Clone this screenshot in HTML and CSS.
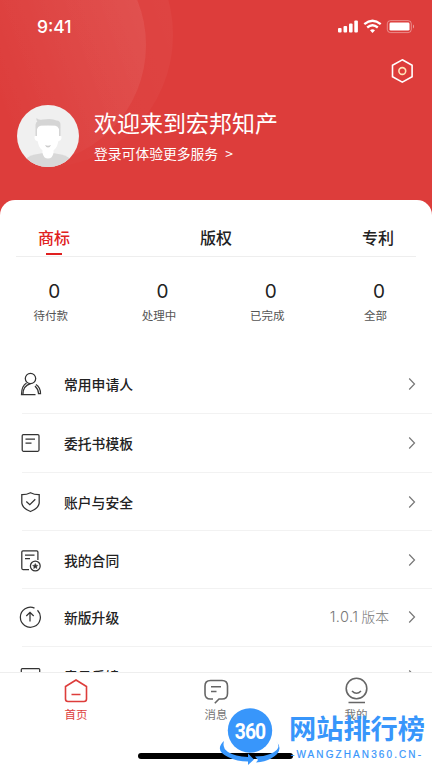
FILE: index.html
```html
<!DOCTYPE html>
<html lang="zh-CN">
<head>
<meta charset="utf-8">
<title>我的</title>
<link rel="stylesheet" href="styles.css">
</head>
<body>
<div class="app">
  <header class="hero">
    <div class="status">
      <span class="time">9:41</span>
      <svg class="status-icons" width="78" height="16" viewBox="0 0 78 16">
        <g fill="#fff">
          <rect x="1" y="9" width="3.6" height="4.5" rx="1"/><rect x="6.5" y="7" width="3.6" height="6.5" rx="1"/><rect x="12" y="4.5" width="3.6" height="9" rx="1"/><rect x="17.3" y="1.5" width="3.6" height="12" rx="1"/>
          <rect x="52.500" y="3.6" width="20" height="8" rx="1.4"/>
          <path d="M76 5.5v4q1-.6 1-2t-1-2z" opacity=".5"/>
          <path d="M33 11.3q2.5-2 5 0L35.5 14z"/>
        </g>
        <rect x="50.3" y="1.6" width="24" height="12" rx="3.2" fill="none" stroke="#fff" opacity=".4"/>
        <path d="M27.3 5.2q8.2-6.8 16.4 0M30.2 8.5q5.3-4.4 10.6 0" fill="none" stroke="#fff" stroke-width="2.3"/>
      </svg>
    </div>
    <div class="tools">
      <svg width="24" height="26" viewBox="0 0 24 26" fill="none" stroke="#fff" stroke-width="1.6"><path d="M12.300 1.800l9.800 5.500v11.400l-9.800 5.500-9.800-5.500V7.300z"/><circle cx="12.300" cy="13" r="3.400" stroke="#ffe3b8"/></svg>
    </div>
    <div class="profile">
      <svg class="avatar" width="62" height="62" viewBox="0 0 62 62">
        <defs><clipPath id="face"><circle cx="31" cy="31" r="31"/></clipPath></defs>
        <g clip-path="url(#face)">
          <rect width="62" height="62" fill="#f0f0f0"/>
          <path d="M9 62v-8q2-4 17-6h10q15 2 17 6v8z" fill="#d8d8d8"/>
          <path d="M25.500 42h11v6q-1 5.500-5.500 5.500T25.500 48z" fill="#fff"/>
          <path d="M20 21h22v10q3-1 2.500 2t-3 3q-2 11-10.500 11T20.500 36q-2.500 0-3-3t2.500-2z" fill="#fff"/>
          <path d="M18.500 31V20q.2-3 1.800-3.500-1.300-1.500-.8-3.500 2 2.500 6 1.500 10-1.500 14 1 4 0 4 4.500v11h-1.500V24q-1-3-4-3.500-7-.7-14 0-3.500 1-4 4v6.500z" fill="#d5d5d5"/>
          <path d="M28 40q3 1.500 6 0-1 2.500-3 2.500t-3-2.500z" fill="#ccc"/>
        </g>
      </svg>
      <div class="welcome">
        <h1>欢迎来到宏邦知产</h1>
        <p>登录可体验更多服务<span class="more">&gt;</span></p>
      </div>
    </div>
  </header>
  <main class="sheet">
    <nav class="tabs"><span class="tab on">商标</span><span class="tab">版权</span><span class="tab">专利</span></nav>
    <section class="stats">
      <div class="stat"><b>0</b><span>待付款</span></div>
      <div class="stat"><b>0</b><span>处理中</span></div>
      <div class="stat"><b>0</b><span>已完成</span></div>
      <div class="stat"><b>0</b><span>全部</span></div>
    </section>
    <section class="menu">
      <div class="row">
        <svg class="icon" viewBox="0 0 24 24"><circle cx="12.500" cy="6.500" r="5.200"/><path d="M8.500 11Q3.500 14 3.500 22.500h14M5 22q0-8 7.500-10.300M18 12.500q4.500 3 4.500 9h-2q0-4-3.500-7.500"/></svg>
        <span class="label">常用申请人</span><svg class="chev" viewBox="0 0 8 14"><path d="M1.200 1.500L6.500 7l-5.300 5.500"/></svg>
      </div>
      <div class="row">
        <svg class="icon" viewBox="0 0 24 24"><rect x="4.200" y="3.500" width="16.800" height="16.800" rx="1.200"/><path d="M7.500 8h9.500M7.500 12h6"/></svg>
        <span class="label">委托书模板</span><svg class="chev" viewBox="0 0 8 14"><path d="M1.200 1.500L6.500 7l-5.300 5.500"/></svg>
      </div>
      <div class="row mid">
        <svg class="icon" viewBox="0 0 24 24"><path d="M12.500 2.700q4 2.100 8.700 2v8.500q-1 5.500-8.700 8.300-7.700-2.800-8.700-8.300V4.700q4.700.1 8.700-2zM8.300 11.500l3.500 3.200 5.500-5.500"/></svg>
        <span class="label">账户与安全</span><svg class="chev" viewBox="0 0 8 14"><path d="M1.200 1.500L6.500 7l-5.300 5.500"/></svg>
      </div>
      <div class="row short">
        <svg class="icon" viewBox="0 0 24 24"><path d="M11 21.500H5q-1.200 0-1.200-1.200V4q0-1.200 1.200-1.200h13.700q1.200 0 1.200 1.200v8M7 7h9.500M7 10.700h5"/><circle cx="17.300" cy="18" r="4.900"/><path d="M17.300 15.500l.8 1.700 1.800.2-1.300 1.300.3 1.800-1.600-.9-1.600.9.300-1.800-1.300-1.300 1.800-.2z" fill="#333" stroke-width=".5"/></svg>
        <span class="label">我的合同</span><svg class="chev" viewBox="0 0 8 14"><path d="M1.200 1.500L6.500 7l-5.300 5.500"/></svg>
      </div>
      <div class="row upgrade">
        <svg class="icon" viewBox="0 0 24 24"><path d="M16.500 3.100a10 10 0 1 0 3 2.100M12 16.500v-9M8.300 11L12 7.300l3.700 3.700"/></svg>
        <span class="label">新版升级</span><span class="version"><span class="num">1.0.1</span> 版本</span><svg class="chev" viewBox="0 0 8 14"><path d="M1.200 1.500L6.500 7l-5.300 5.500"/></svg>
      </div>
      <div class="row last">
        <svg class="icon" viewBox="0 0 24 24"><rect x="3.300" y="4.500" width="18.400" height="16" rx="1"/></svg>
        <span class="label">意见反馈</span><svg class="chev" viewBox="0 0 8 14"><path d="M1.200 1.500L6.500 7l-5.300 5.500"/></svg>
      </div>
    </section>
  </main>
  <footer class="bar">
    <div class="nav on"><svg viewBox="0 0 28 30"><path d="M14 4.500L24.500 11v12.500q0 2.500-2.500 2.500H6q-2.500 0-2.500-2.500V11zM9.500 19h9"/></svg><span>首页</span></div>
    <div class="nav"><svg viewBox="0 0 28 30"><path d="M11 23.500H8.500q-5.500 0-5.500-5.500v-7.500Q3 5 8.500 5h11.500q5.500 0 5.500 5.500V18q0 5.500-5.500 5.500h-3l-4.200 4.300M9 11.300h10M9 16h5.500"/></svg><span>消息</span></div>
    <div class="nav"><svg viewBox="0 0 28 30"><circle cx="14.500" cy="13" r="10.300"/><path d="M10 15.500q4.500 4.500 9 0M6.500 27h16.500"/></svg><span>我的</span></div>
  </footer>
  <div class="home"></div>
  <div class="mark">
    <svg width="62" height="62" viewBox="0 0 62 62">
      <circle cx="31" cy="24.500" r="22.200" fill="#3896fb"/>
      <path d="M5 35Q-5 44 9 51q9 4.500 20 4.500V59l6-5.500-6-6v3.500Q16 50.500 9 46q-6-4-4-11z" fill="#3896fb"/>
      <path d="M57 35q7 8-6 13-6 2.500-15 2.500l3 3.500-2 2.500q9-.5 15-4 14-8 5-17.500z" fill="#3896fb"/>
      <text transform="translate(31 33) scale(.86 1)" text-anchor="middle">360</text>
    </svg>
    <div class="mark-text"><strong>网站排行榜</strong><span>-WANGZHAN360.CN-</span></div>
  </div>
</div>
</body>
</html>
```
FILE: styles.css
```css
* { box-sizing: border-box; }
body { margin: 0; font-family: "Noto Sans CJK SC", sans-serif; color: #222; background: #fff; }
.app { position: relative; width: 432px; height: 768px; overflow: hidden; display: flex; flex-direction: column; }
h1, p { margin: 0; font-weight: 400; }

.hero { position: relative; z-index: 0; overflow: hidden; height: 216px; flex: none; color: #fff; background: #dd3d3b; }
.hero::before, .hero::after { content: ""; position: absolute; z-index: -1; border-radius: 50%; }
.hero::before { left: -94px; top: -75px; width: 240px; height: 240px; background: linear-gradient(70deg, rgba(255,255,255,0) 35%, rgba(255,255,255,.09)); }
.hero::after { left: -93px; top: -98px; width: 266px; height: 266px; background: linear-gradient(70deg, rgba(255,255,255,0) 30%, rgba(255,255,255,.045)); }
.status { display: flex; justify-content: space-between; height: 54px; padding: 16px 17px 0 37px; }
.time { font: 500 17.500px/22px Inter, sans-serif; }
.status-icons { margin-top: 3px; }
.tools { display: flex; justify-content: flex-end; height: 51px; padding: 4px 18px 0 0; }
.profile { display: flex; padding-left: 17px; }
.welcome { margin-left: 15px; }
.welcome h1 { font-size: 23px; line-height: 34px; }
.welcome p { font-size: 13.800px; line-height: 20px; margin-top: 4px; }
.more { margin-left: 7px; }

.sheet { position: relative; z-index: 1; flex: none; height: 472px; margin-top: -16px; background: #fff; border-radius: 15px 15px 0 0; overflow: hidden; }
.tabs { display: flex; justify-content: space-between; margin: 0 16px; height: 57px; padding: 25px 22px 0; border-bottom: 1px solid #eee; font-size: 16px; line-height: 24px; font-weight: 500; }
.tab { display: flex; flex-direction: column; align-items: center; }
.tab.on { color: #e02020; }
.tab.on::after { content: ""; width: 16px; height: 2px; margin-top: 4px; background: #e02020; }
.stats { display: grid; grid-template-columns: repeat(4, 108.300px); height: 98px; padding-top: 21px; }
.stat { display: flex; flex-direction: column; align-items: center; }
.stat b { font: 400 19px/27px Inter, sans-serif; }
.stat span { font-size: 11.500px; line-height: 18px; margin: 1px 7px 0 0; color: #555; }

.row { display: flex; align-items: center; height: 59px; margin-left: 22px; padding-right: 16px; border-bottom: 1px solid #f2f2f2; }
.row.mid, .row.short { height: 58px; padding-top: 1px; }
.row.upgrade { height: 58px; padding-bottom: 2px; }
.row.last { border: 0; height: 57px; }
.icon { width: 24px; height: 24px; margin-left: -4px; fill: none; stroke: #333; stroke-width: 1.250; }
.label { margin: 0 auto 0 22px; font-size: 13.800px; line-height: 20px; font-weight: 500; }
.version { margin-right: 19px; font-size: 13.800px; line-height: 20px; font-weight: 300; color: #777; }
.num { font-family: Inter, sans-serif; font-size: 14.500px; letter-spacing: .4px; }
.chev { width: 8px; height: 14px; fill: none; stroke: #777; stroke-width: 1.200; }

.bar { position: relative; z-index: 1; flex: none; display: grid; grid-template-columns: repeat(3, 140px); height: 96px; padding: 2px 0 0 6px; background: #fff; border-top: 1px solid #eee; }
.nav { display: flex; flex-direction: column; align-items: center; color: #777; font-size: 11.500px; line-height: 17px; }
.nav svg { width: 28px; height: 31px; fill: none; stroke: #666; stroke-width: 1.600; }
.nav.on { color: #dd3d3b; }
.nav.on svg { stroke: #dd3d3b; }
.home { position: absolute; z-index: 2; left: 138px; top: 753px; width: 155px; height: 6px; border-radius: 3px; background: #000; }

.mark { position: absolute; z-index: 3; left: 219px; top: 706px; display: flex; color: #3896fb; }
.mark text { font: 700 22.500px Roboto, sans-serif; letter-spacing: -1px; fill: #fff; }
.mark-text { display: flex; flex-direction: column; margin-left: 8px; }
.mark-text strong { font-size: 27.200px; line-height: 38px; font-weight: 700; white-space: nowrap; margin-top: 2px; }
.mark-text span { font: 10px/12px "Liberation Sans", sans-serif; -webkit-text-stroke: .2px #3896fb; letter-spacing: 2.100px; margin: 3px 0 0 2px; white-space: nowrap; }
```
